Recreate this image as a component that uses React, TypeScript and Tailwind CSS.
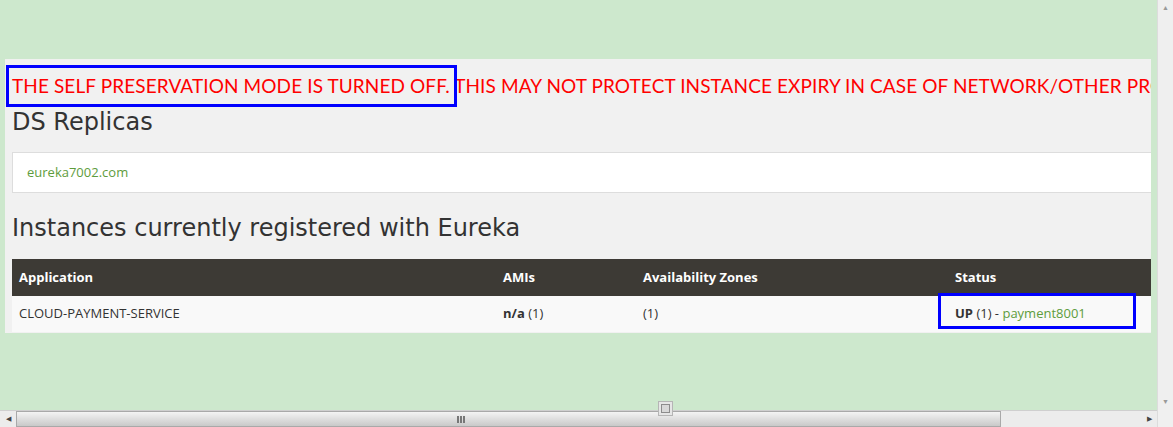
import React from 'react';

const cols = [
  { label: 'Application', w: 'w-[484px]' },
  { label: 'AMIs', w: 'w-[140px]' },
  { label: 'Availability Zones', w: 'w-[312px]' },
  { label: 'Status', w: 'w-[260px]' },
];

export default function App() {
  return (
    <div className="relative flex h-[427px] w-[1173px] overflow-hidden bg-[#cde8cd] font-['Open_Sans',sans-serif]">
      <div className="flex w-[1157px] flex-col">
        {/* page area */}
        <div className="h-[410px] overflow-hidden pl-[5px] pt-[59px]">
          <div className="h-[274px] w-[1146px] overflow-hidden bg-[#f1f1f1] pl-[7px]">
            <div className="whitespace-nowrap pt-[16px] font-['Lato',sans-serif] text-[19px] leading-[22px] tracking-[0.1px] text-[#ff0000]">
              THE SELF PRESERVATION MODE IS TURNED OFF. THIS MAY NOT PROTECT INSTANCE EXPIRY IN CASE OF NETWORK/OTHER PRO
            </div>
            <h1 className="mt-[11px] font-['DejaVu_Sans',sans-serif] text-[24px] leading-[28px] text-[#333333]">DS Replicas</h1>
            <div className="mt-[16px] flex h-[41px] w-[1160px] items-center border border-[#dddddd] bg-white px-[14px] text-[13px] text-[#5e9c3c]">
              eureka7002.com
            </div>
            <h1 className="mt-[21px] font-['DejaVu_Sans',sans-serif] text-[24px] leading-[28px] text-[#333333]">
              Instances currently registered with Eureka
            </h1>
            <div className="mt-[17px] w-[1196px] text-[13px]">
              <div className="flex h-[37px] items-center bg-[#3d3a35] font-bold text-white">
                {cols.map((c) => (
                  <div key={c.label} className={`${c.w} px-[7px]`}>{c.label}</div>
                ))}
              </div>
              <div className="flex h-[36px] items-center bg-[#f9f9f9] text-[#333333]">
                <div className="w-[484px] px-[7px]">CLOUD-PAYMENT-SERVICE</div>
                <div className="w-[140px] px-[7px]"><b>n/a</b> (1)</div>
                <div className="w-[312px] px-[7px]">(1)</div>
                <div className="w-[260px] px-[7px]">
                  <b>UP</b> (1) - <span className="text-[#5e9c3c]">payment8001</span>
                </div>
              </div>
            </div>
          </div>
        </div>
        {/* horizontal scrollbar */}
        <div className="flex h-[17px] items-stretch border-t border-[#cfcfcf] bg-[#ececec]">
          <div className="flex w-[16px] items-center justify-center text-[7px] text-[#444]">◀</div>
          <div className="flex w-[985px] items-center border border-[#a9a9a9] bg-gradient-to-b from-[#f4f4f4] to-[#c9c9c9] pl-[440px]">
            <div className="flex h-[7px] gap-[1px]">
              <div className="w-[2px] bg-[#777]" />
              <div className="w-[2px] bg-[#777]" />
              <div className="w-[2px] bg-[#777]" />
            </div>
          </div>
          <div className="flex-1" />
          <div className="flex w-[16px] items-center justify-center text-[7px] text-[#444]">▶</div>
        </div>
      </div>
      {/* vertical scrollbar */}
      <div className="flex w-[16px] flex-col border-l border-[#dcdcdc] bg-[#efefef]">
        <div className="flex h-[16px] items-center justify-center text-[7px] text-[#999]">▲</div>
        <div className="flex-1" />
        <div className="flex h-[16px] items-center justify-center text-[7px] text-[#999]">▼</div>
        <div className="h-[17px] bg-[#f0f0f0]" />
      </div>
      {/* resize grip */}
      <div className="absolute left-[658px] top-[401px] flex h-[15px] w-[15px] items-center justify-center border border-[#b5b5b5] bg-[#e6e6e6]">
        <div className="h-[9px] w-[9px] border border-[#8c8c8c] bg-[#d8d8d8]" />
      </div>
      {/* annotation boxes */}
      <div className="absolute left-[6px] top-[65px] h-[42px] w-[451px] border-[3px] border-[#0000ff]" />
      <div className="absolute left-[938px] top-[293px] h-[36px] w-[198px] border-[3px] border-[#0000ff]" />
    </div>
  );
}
